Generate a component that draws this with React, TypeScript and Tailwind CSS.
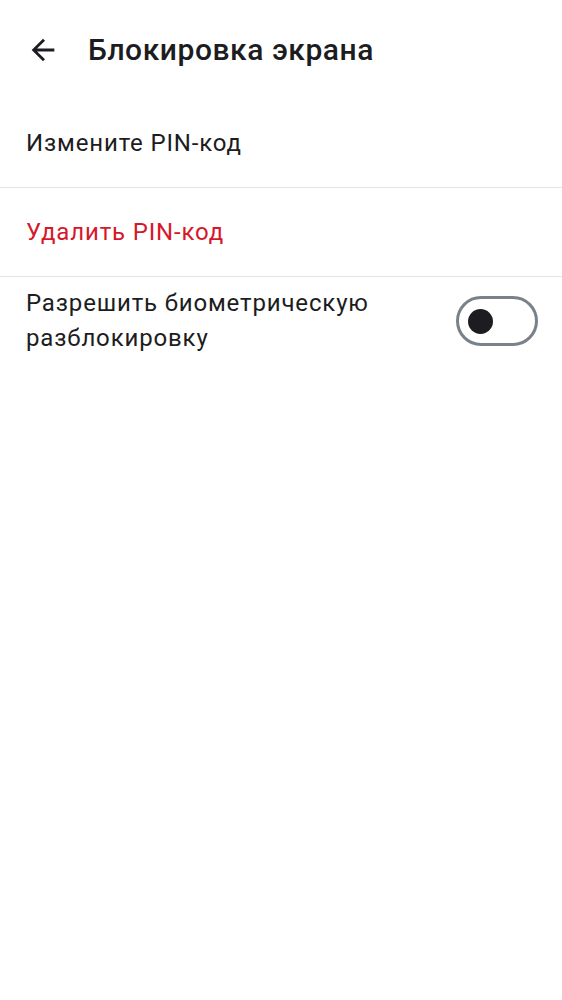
import React, { useState } from "react";

function BackArrow() {
  return (
    <svg width="34" height="34" viewBox="0 0 24 24" fill="#1c1c21">
      <path d="M20 11H7.83l5.59-5.59L12 4l-8 8 8 8 1.41-1.41L7.83 13H20v-2z" />
    </svg>
  );
}

export default function App() {
  const [bio, setBio] = useState(false);

  return (
    <div className="min-h-[1000px] w-[562px] bg-white text-[#1c1c21] font-['Roboto',sans-serif]">
      <header className="flex h-[99px] items-center">
        <button className="ml-[26px] flex h-[34px] w-[34px] items-center justify-center">
          <BackArrow />
        </button>
        <h1 className="ml-[28px] text-[30px] font-medium leading-none tracking-[0.55px]">Блокировка экрана</h1>
      </header>

      <div className="flex h-[89px] items-center border-b border-[#e1e4e8] px-[26px] text-[24px] tracking-[0.85px]">
        Измените PIN-код
      </div>

      <div className="flex h-[89px] items-center border-b border-[#e1e4e8] px-[26px] text-[24px] tracking-[0.85px] text-[#d6182b]">
        Удалить PIN-код
      </div>

      <div className="flex items-center justify-between pl-[26px] pr-[24px] pt-[9px]">
        <p className="w-[400px] text-[24px] leading-[35px] tracking-[0.85px]">Разрешить биометрическую разблокировку</p>
        <button
          onClick={() => setBio(!bio)}
          className="flex h-[50px] w-[82px] items-center rounded-full border-[3px] border-[#79818a] px-[9px]"
        >
          <span className="h-[25px] w-[25px] rounded-full bg-[#1c1c21]" />
        </button>
      </div>
    </div>
  );
}
